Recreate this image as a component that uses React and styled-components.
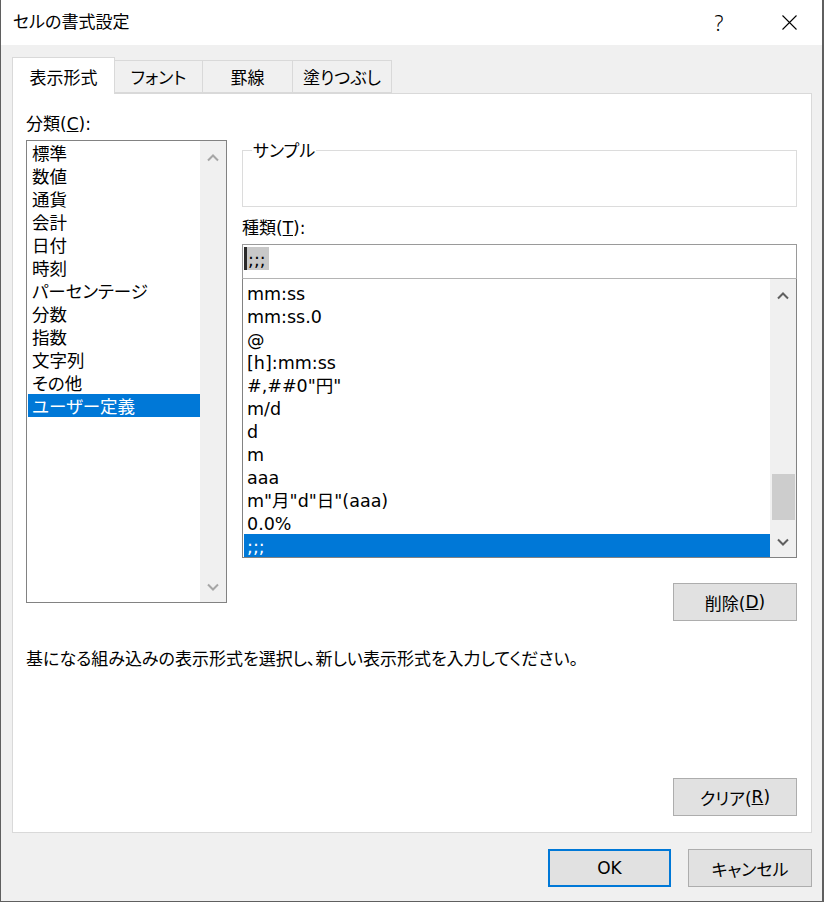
import React from "react";
import styled, { createGlobalStyle } from "styled-components";

const GlobalStyle = createGlobalStyle`
  html, body {
    margin: 0;
    padding: 0;
    background: #ffffff;
  }
  body {
    font-family: "DejaVu Sans", "Noto Sans CJK JP", sans-serif;
    font-feature-settings: "palt";
    color: #000;
  }
  * {
    box-sizing: border-box;
  }
`;

const categories = [
  "標準",
  "数値",
  "通貨",
  "会計",
  "日付",
  "時刻",
  "パーセンテージ",
  "分数",
  "指数",
  "文字列",
  "その他",
  "ユーザー定義",
];

const formats = [
  "mm:ss",
  "mm:ss.0",
  "@",
  "[h]:mm:ss",
  '#,##0"円"',
  "m/d",
  "d",
  "m",
  "aaa",
  'm"月"d"日"(aaa)',
  "0.0%",
  ";;;",
];

const tabs = ["表示形式", "フォント", "罫線", "塗りつぶし"];
const tabWidths = [103, 89, 91, 100];

const Window = styled.div`
  width: 824px;
  height: 902px;
  background: #f0f0f0;
  border-left: 1px solid #5f5f5f;
  border-right: 2px solid #5f5f5f;
  border-bottom: 1px solid #5f5f5f;
  display: flex;
  flex-direction: column;
`;

const TitleBar = styled.div`
  height: 45px;
  flex: none;
  background: #ffffff;
  display: flex;
  align-items: center;
  padding-left: 12px;
`;

const Title = styled.div`
  flex: 1;
  font-size: 17px;
  line-height: 23px;
`;

const HelpGlyph = styled.div`
  width: 20px;
  text-align: center;
  font-family: "Noto Sans", sans-serif;
  font-size: 21px;
  font-weight: 300;
  margin-right: 53px;
`;

const CloseGlyph = styled.svg`
  width: 15px;
  height: 15px;
  margin-right: 25px;
`;

const Body = styled.div`
  flex: 1;
  display: flex;
  flex-direction: column;
  padding: 12px 10px 14px 11px;
`;

const TabStrip = styled.div`
  height: 36px;
  display: flex;
  align-items: flex-end;
  position: relative;
  z-index: 1;
`;

const Tab = styled.div`
  width: ${(p) => p.$width}px;
  height: ${(p) => (p.$active ? 37 : 33)}px;
  margin-bottom: ${(p) => (p.$active ? -1 : 0)}px;
  margin-left: ${(p) => (p.$first ? 0 : -1)}px;
  background: ${(p) => (p.$active ? "#ffffff" : "#f0f0f0")};
  border: 1px solid #d9d9d9;
  border-bottom: ${(p) => (p.$active ? "none" : "1px solid #d9d9d9")};
  display: flex;
  align-items: center;
  justify-content: center;
  font-size: 17px;
  position: relative;
  z-index: ${(p) => (p.$active ? 2 : 1)};
`;

const Panel = styled.div`
  height: 740px;
  background: #ffffff;
  border: 1px solid #d9d9d9;
  padding: 0 14px 16px 13px;
  display: flex;
  flex-direction: column;
`;

const Columns = styled.div`
  display: grid;
  grid-template-columns: 201px 555px;
  column-gap: 15px;
  align-items: start;
`;

const LeftColumn = styled.div`
  padding-top: 19px;
  display: flex;
  flex-direction: column;
`;

const RightColumn = styled.div`
  padding-top: 56px;
  display: flex;
  flex-direction: column;
`;

const FieldLabel = styled.div`
  font-size: 17px;
  line-height: 23px;
  height: 23px;
  margin-top: ${(p) => p.$gap || 0}px;
`;

const ListBox = styled.div`
  height: ${(p) => p.$height}px;
  border: 1px solid #828282;
  border-top: ${(p) => (p.$joined ? "none" : "1px solid #828282")};
  display: flex;
  background: #ffffff;
  margin-top: ${(p) => p.$gap || 0}px;
`;

const Items = styled.div`
  flex: 1;
  padding: ${(p) => p.$top || 0}px 0 0 1px;
  overflow: hidden;
`;

const Item = styled.div`
  height: 23px;
  line-height: 23px;
  padding-top: 2px;
  font-size: 17.5px;
  padding-left: ${(p) => p.$indent}px;
  white-space: nowrap;
  background: ${(p) => (p.$selected ? "#0078d7" : "transparent")};
  color: ${(p) => (p.$selected ? "#ffffff" : "#000000")};
  overflow: hidden;
`;

const ScrollBar = styled.div`
  width: 26px;
  flex: none;
  background: #f0f0f0;
  display: flex;
  flex-direction: column;
`;

const ArrowBox = styled.div`
  height: 31px;
  flex: none;
  display: flex;
  align-items: center;
  justify-content: center;
  padding-top: ${(p) => (p.$down ? 0 : 3)}px;
`;

const Track = styled.div`
  flex: 1;
  position: relative;
`;

const Thumb = styled.div`
  position: absolute;
  left: 2px;
  right: 1px;
  height: 46px;
  background: #cdcdcd;
`;

const GroupBox = styled.div`
  height: 57px;
  border: 1px solid #dcdcdc;
  position: relative;
`;

const GroupLegend = styled.span`
  position: absolute;
  left: 9px;
  top: -11px;
  padding: 0 1px;
  background: #ffffff;
  font-size: 17px;
  line-height: 23px;
`;

const TextInput = styled.div`
  height: 35px;
  margin-top: 4px;
  border: 1px solid #9a9a9a;
  border-bottom-color: #b4b4b4;
  padding: 2px 0 0 1px;
`;

const SelectedText = styled.span`
  display: inline-block;
  height: 23px;
  line-height: 23px;
  padding-top: 2px;
  font-size: 17.5px;
  padding-right: 3px;
  padding-left: 1px;
  background: #c8c8c8;
  border-left: 3px solid #2a2a2a;
`;

const Button = styled.div`
  width: ${(p) => p.$width || 124}px;
  height: 38px;
  background: #e1e1e1;
  border: ${(p) => (p.$default ? "2px solid #0078d7" : "1px solid #adadad")};
  display: flex;
  align-items: center;
  justify-content: center;
  font-size: 17px;
  align-self: flex-end;
  margin-top: ${(p) => p.$gap || 0}px;
`;

const Hint = styled.div`
  margin-top: 27px;
  font-size: 17px;
  line-height: 23px;
`;

const PushDown = styled.div`
  flex: 1;
`;

const Footer = styled.div`
  margin-top: 16px;
  display: flex;
  justify-content: flex-end;
  gap: 17px;
`;

const Chevron = ({ down, color }) => (
  <svg width="12" height="8" viewBox="0 0 12 8">
    <polyline
      points={down ? "1,1.5 6,6.5 11,1.5" : "1,6.5 6,1.5 11,6.5"}
      fill="none"
      stroke={color}
      strokeWidth="2"
    />
  </svg>
);

const Scroller = ({ color, thumbTop }) => (
  <ScrollBar>
    <ArrowBox>
      <Chevron color={color} />
    </ArrowBox>
    <Track>
      {thumbTop != null && <Thumb style={{ top: thumbTop }} />}
    </Track>
    <ArrowBox $down>
      <Chevron down color={color} />
    </ArrowBox>
  </ScrollBar>
);

const Mnemonic = ({ text, keyChar }) => (
  <>
    {text}(<u>{keyChar}</u>)
  </>
);

export default function App() {
  const selectedCategory = categories.length - 1;
  const selectedFormat = formats.length - 1;
  // thumb offset in the format list track, from how far the list is scrolled
  const scrolled = 0.965;
  const trackSpace = 278 - 62 - 46;

  return (
    <>
      <GlobalStyle />
      <Window>
        <TitleBar>
          <Title>セルの書式設定</Title>
          <HelpGlyph>?</HelpGlyph>
          <CloseGlyph viewBox="0 0 15 15">
            <path d="M0.5 0.5 L14.5 14.5 M14.5 0.5 L0.5 14.5" stroke="#000" strokeWidth="1.1" />
          </CloseGlyph>
        </TitleBar>
        <Body>
          <TabStrip>
            {tabs.map((t, i) => (
              <Tab key={t} $width={tabWidths[i]} $active={i === 0} $first={i === 0}>
                {t}
              </Tab>
            ))}
          </TabStrip>
          <Panel>
            <Columns>
              <LeftColumn>
                <FieldLabel>
                  <Mnemonic text="分類" keyChar="C" />:
                </FieldLabel>
                <ListBox $height={463} $gap={4}>
                  <Items>
                    {categories.map((c, i) => (
                      <Item key={c} $indent={4} $selected={i === selectedCategory}>
                        {c}
                      </Item>
                    ))}
                  </Items>
                  <Scroller color="#a6a6a6" />
                </ListBox>
              </LeftColumn>
              <RightColumn>
                <GroupBox>
                  <GroupLegend>サンプル</GroupLegend>
                </GroupBox>
                <FieldLabel $gap={10}>
                  <Mnemonic text="種類" keyChar="T" />:
                </FieldLabel>
                <TextInput>
                  <SelectedText>;;;</SelectedText>
                </TextInput>
                <ListBox $height={279} $joined>
                  <Items $top={2}>
                    {formats.map((f, i) => (
                      <Item key={f} $indent={3} $selected={i === selectedFormat}>
                        {f}
                      </Item>
                    ))}
                  </Items>
                  <Scroller color="#606060" thumbTop={Math.round(scrolled * trackSpace)} />
                </ListBox>
                <Button $gap={25}>
                  <Mnemonic text="削除" keyChar="D" />
                </Button>
              </RightColumn>
            </Columns>
            <Hint>基になる組み込みの表示形式を選択し、新しい表示形式を入力してください。</Hint>
            <PushDown />
            <Button>
              <Mnemonic text="クリア" keyChar="R" />
            </Button>
          </Panel>
          <Footer>
            <Button $width={123} $default>
              OK
            </Button>
            <Button>キャンセル</Button>
          </Footer>
        </Body>
      </Window>
    </>
  );
}
